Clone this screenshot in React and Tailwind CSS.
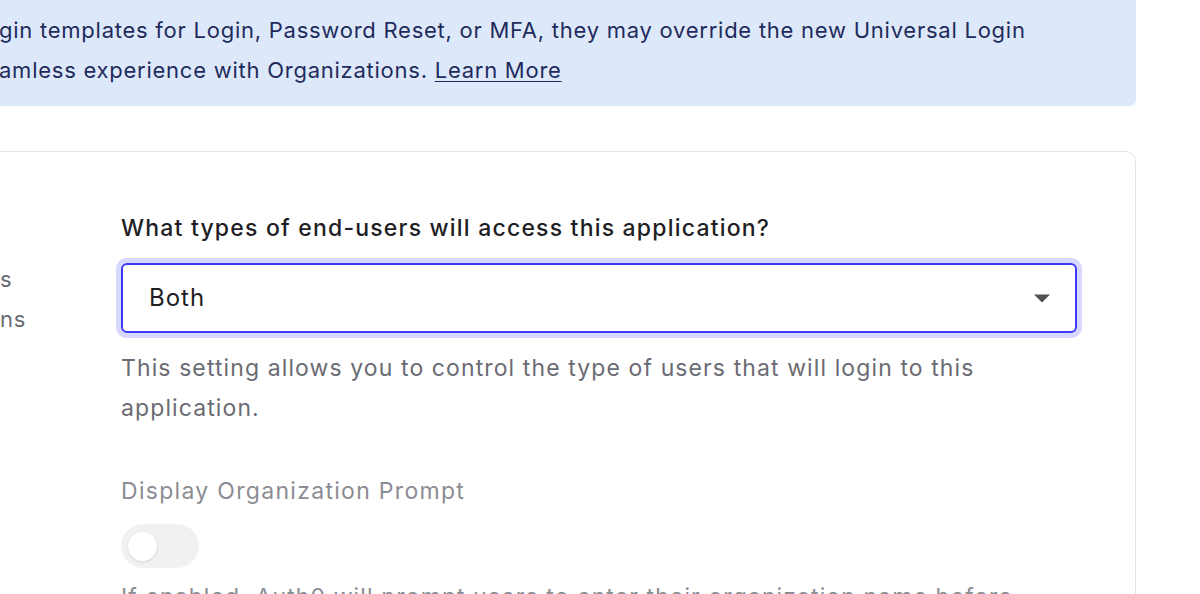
import React from 'react';

// Organizations settings card, zoomed-in view
export default function App() {
  return (
    <div className="w-[1200px] h-[594px] overflow-hidden bg-white font-['Inter','Liberation_Sans',sans-serif] text-[22px] tracking-[0.75px]">
      {/* info banner */}
      <div className="w-[1136px] h-[106px] bg-[#dde9fb] rounded-br-md pt-[10px] text-[#1f2b5b] leading-[40px] whitespace-nowrap overflow-hidden">
        <div className="-ml-[1px]">gin templates for Login, Password Reset, or MFA, they may override the new Universal Login</div>
        <div className="-ml-[1px]">
          amless experience with Organizations.{' '}
          <a href="#" className="underline underline-offset-[3px] decoration-1">Learn More</a>
        </div>
      </div>

      {/* settings card */}
      <div className="mt-[45px] w-[1136px] h-[500px] border border-l-0 border-[#e4e4e6] rounded-tr-[10px] flex overflow-hidden">
        <div className="w-[121px] shrink-0 pt-[107px] text-[#6b6b73] leading-[40px]">
          <div>s</div>
          <div>ns</div>
        </div>

        <div className="flex-1 min-w-0 pt-[60px] pr-[58px]">
          <div className="font-medium text-[23px] tracking-[1.2px] text-[#1e1e24] leading-[32px]">
            What types of end-users will access this application?
          </div>

          <div className="mt-[19px] h-[70px] border-2 border-[#3b3bf6] rounded-md ring-[5px] ring-[#d8d8fe] flex items-center justify-between pl-[26px] pr-[24px]">
            <span className="text-[#1e1e24] text-[24px] tracking-[1px]">Both</span>
            <svg width="18" height="9" viewBox="0 0 18 9">
              <path d="M1 0.5 L17 0.5 L9 8.5 Z" fill="#505055" />
            </svg>
          </div>

          <div className="mt-[15px] text-[#6b6b73] text-[23px] leading-[40px] tracking-[1.1px]">
            This setting allows you to control the type of users that will login to this application.
          </div>

          <div className="mt-[43px] text-[#8c8c93] text-[23px] tracking-[1.3px] leading-[40px]">Display Organization Prompt</div>

          <div className="mt-[13px] w-[78px] h-[44px] rounded-full bg-[#f1f1f3] flex items-center pl-[7px]">
            <div className="w-[29px] h-[29px] rounded-full bg-white shadow-[0_1px_3px_rgba(0,0,0,0.12)]" />
          </div>

          <div className="mt-[9px] text-[#8c8c93] text-[23px] tracking-[1.1px] leading-[40px]">
            If enabled, Auth0 will prompt users to enter their organization name before authenticating.
          </div>
        </div>
      </div>
    </div>
  );
}
